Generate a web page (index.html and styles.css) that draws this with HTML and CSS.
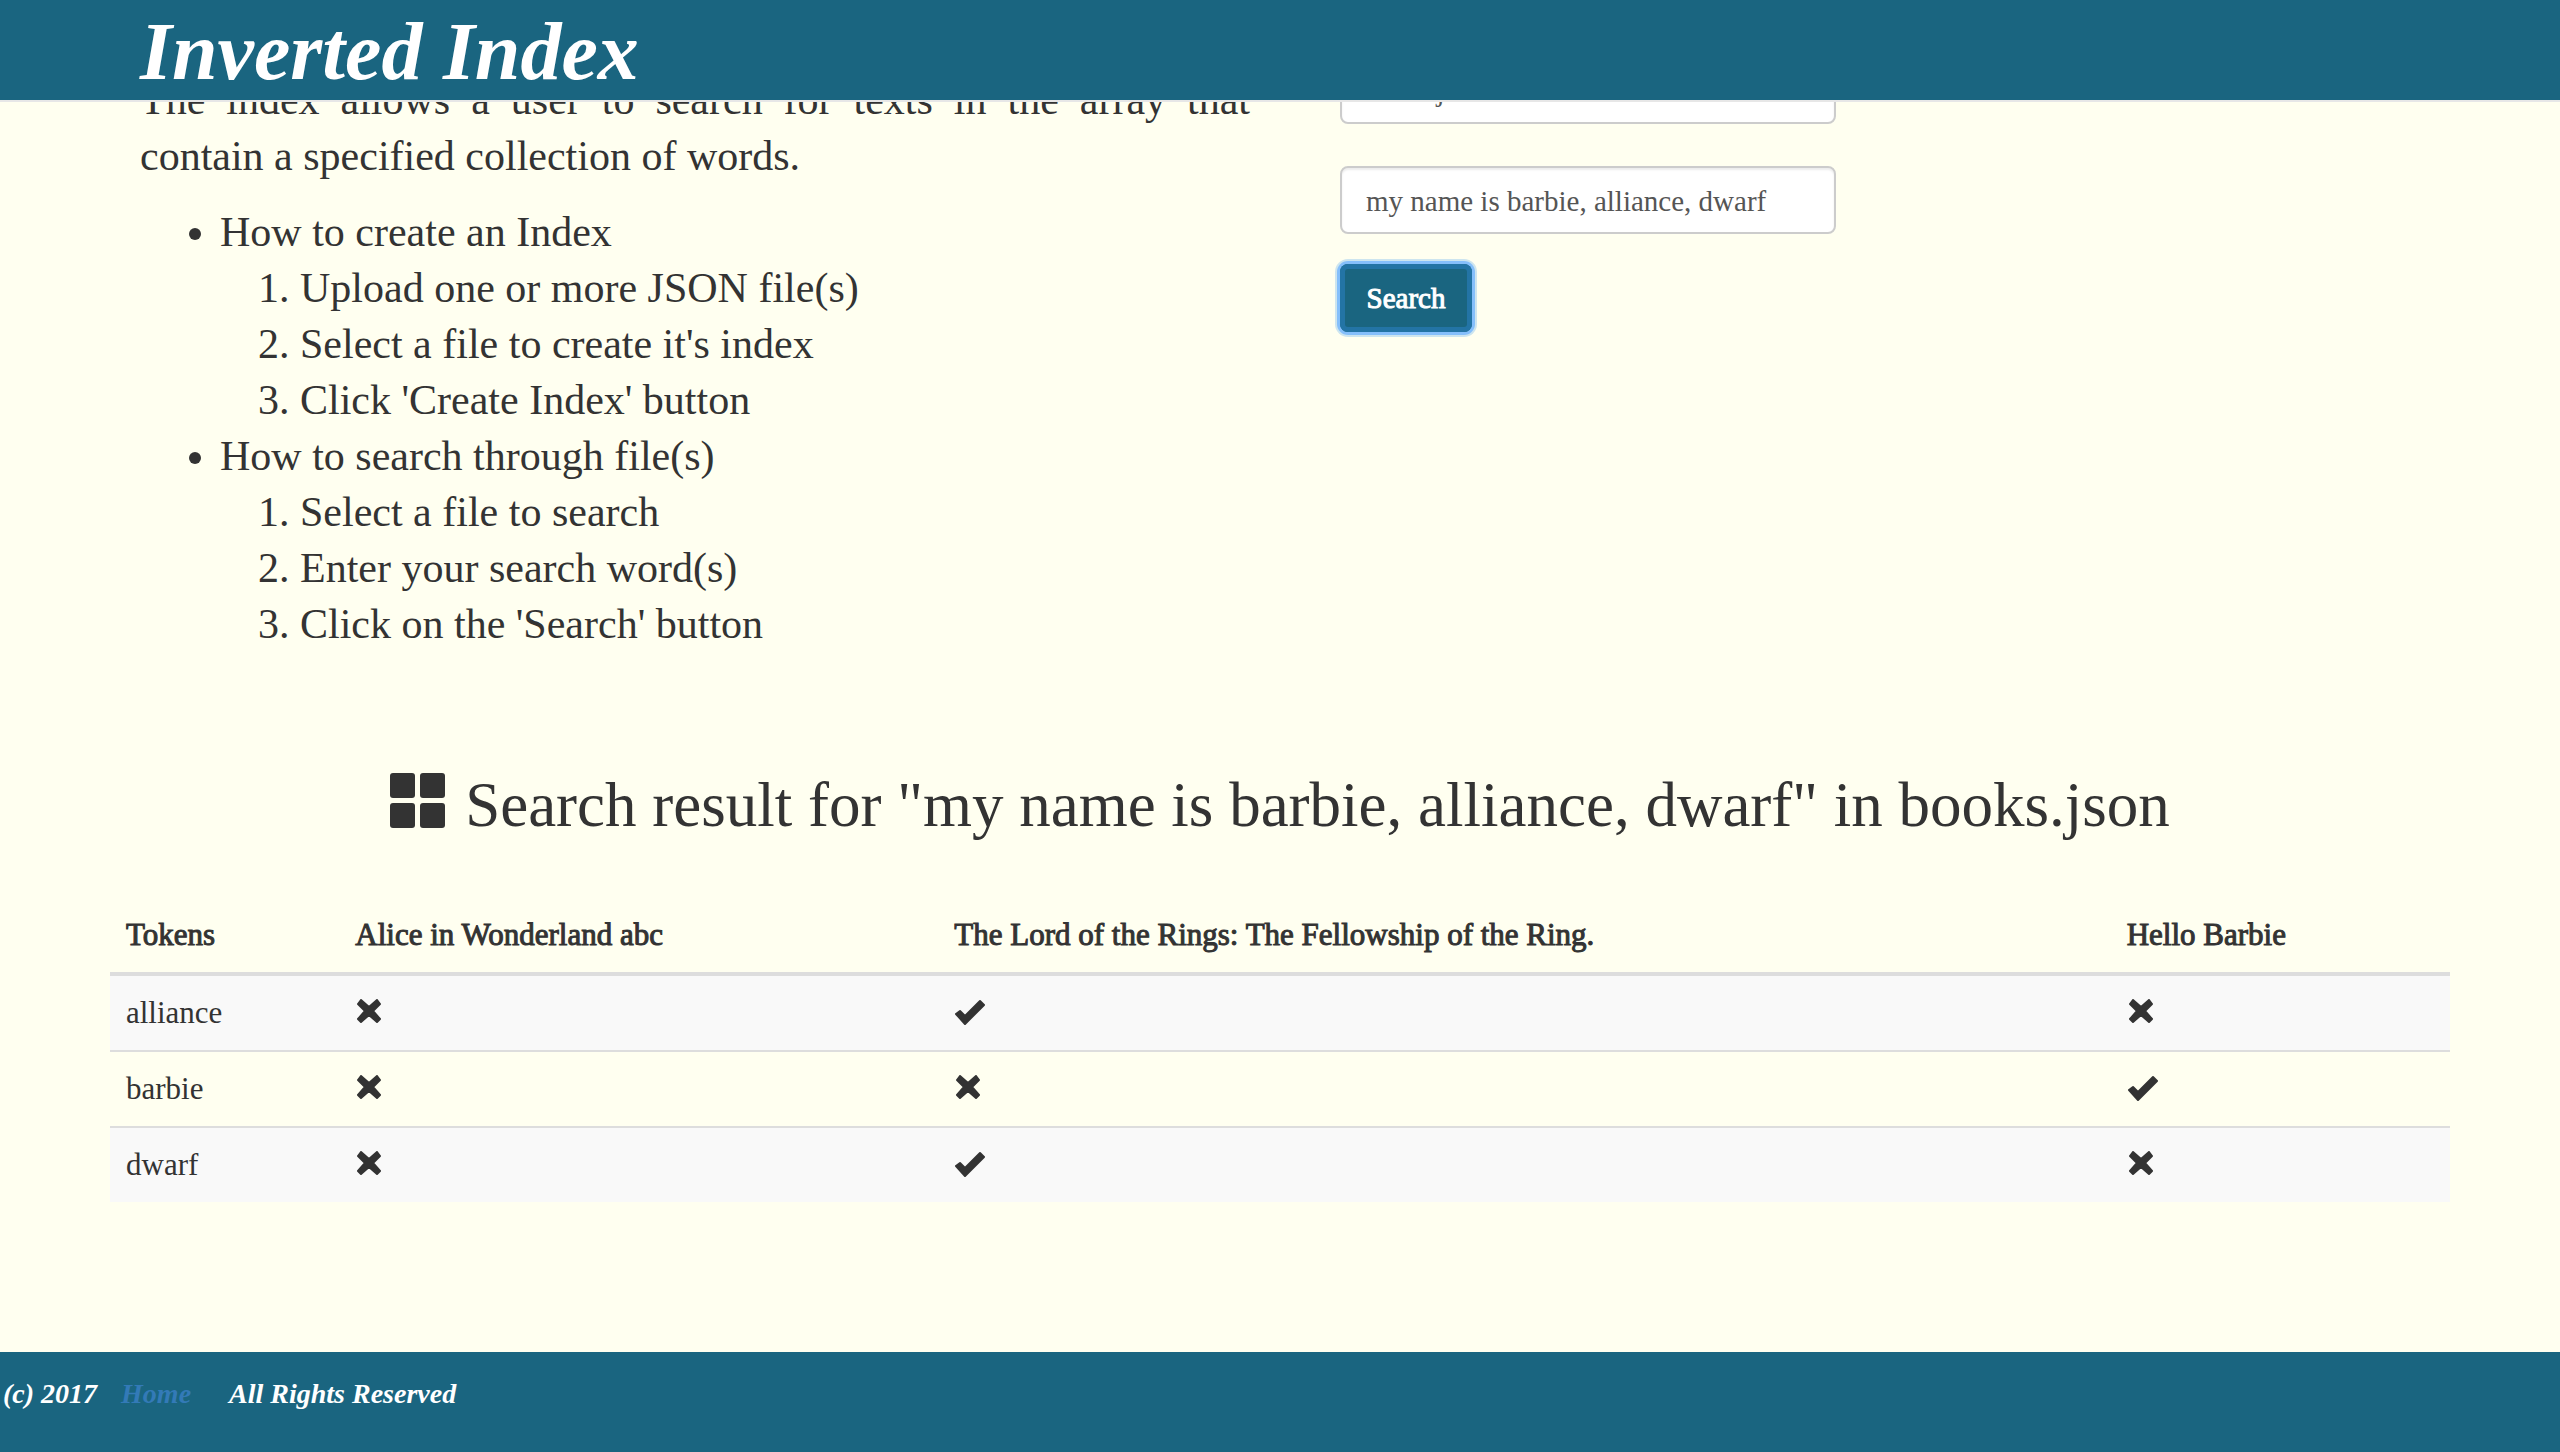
FILE: index.html
```html
<!DOCTYPE html>
<html lang="en">
<head>
<meta charset="utf-8">
<title>Inverted Index</title>
<link rel="stylesheet" href="styles.css">
</head>
<body>
<svg class="sprite" aria-hidden="true">
  <symbol id="cross" viewBox="0 0 32 26">
    <path d="M3 5 6 1 14 8 22 1 25 5 18 12 25 20 22 23 14 16 6 23 3 20 10 12Z"/>
  </symbol>
  <symbol id="check" viewBox="0 0 32 26">
    <path d="M2 15 6 12 11 17 26 2 30 6 11 25Z"/>
  </symbol>
</svg>
<header class="navbar"><h1 class="brand">Inverted Index</h1></header>
<main class="content">
  <div class="intro">
    <section class="guide">
      <p>The index allows a user to search for texts in the array that contain a specified collection of words.</p>
      <ul>
        <li>How to create an Index
          <ol>
            <li>Upload one or more JSON file(s)</li>
            <li>Select a file to create it's index</li>
            <li>Click 'Create Index' button</li>
          </ol>
        </li>
        <li>How to search through file(s)
          <ol>
            <li>Select a file to search</li>
            <li>Enter your search word(s)</li>
            <li>Click on the 'Search' button</li>
          </ol>
        </li>
      </ul>
    </section>
    <form class="search">
      <select class="field" aria-label="File"><option>books.json</option></select>
      <input class="field" type="text" aria-label="Search words" value="my name is barbie, alliance, dwarf">
      <button class="btn" type="button">Search</button>
    </form>
  </div>
  <h2 class="result-title">
    <svg class="grid-icon" viewBox="0 0 55 55" aria-hidden="true">
      <rect width="25" height="25" rx="3"/><rect x="30" width="25" height="25" rx="3"/>
      <rect y="30" width="25" height="25" rx="3"/><rect x="30" y="30" width="25" height="25" rx="3"/>
    </svg>
    <span>Search result for "my name is barbie, alliance, dwarf" in books.json</span>
  </h2>
  <table class="results">
    <colgroup><col class="col-token"><col class="col-a"><col class="col-b"><col></colgroup>
    <thead>
      <tr><th>Tokens</th><th>Alice in Wonderland abc</th><th>The Lord of the Rings: The Fellowship of the Ring.</th><th>Hello Barbie</th></tr>
    </thead>
    <tbody>
      <tr>
        <td>alliance</td>
        <td><svg class="mark"><use href="#cross"/></svg></td>
        <td><svg class="mark"><use href="#check"/></svg></td>
        <td><svg class="mark"><use href="#cross"/></svg></td>
      </tr>
      <tr>
        <td>barbie</td>
        <td><svg class="mark"><use href="#cross"/></svg></td>
        <td><svg class="mark"><use href="#cross"/></svg></td>
        <td><svg class="mark"><use href="#check"/></svg></td>
      </tr>
      <tr>
        <td>dwarf</td>
        <td><svg class="mark"><use href="#cross"/></svg></td>
        <td><svg class="mark"><use href="#check"/></svg></td>
        <td><svg class="mark"><use href="#cross"/></svg></td>
      </tr>
    </tbody>
  </table>
</main>
<footer class="footer">
  <span>(c) 2017</span>
  <a href="#">Home</a>
  <span class="rights">All Rights Reserved</span>
</footer>
</body>
</html>
```
FILE: styles.css
```css
* { box-sizing: border-box; }

body {
  margin: 0;
  min-height: 100vh;
  display: flex;
  flex-direction: column;
  background: #fffff0;
  color: #333;
  font-family: "Liberation Serif", "Times New Roman", serif;
}

.sprite { position: absolute; width: 0; height: 0; }

/* Fixed bar: page content passes beneath it */
.navbar {
  position: fixed;
  top: 0;
  left: 0;
  right: 0;
  z-index: 10;
  height: 102px;
  padding: 4px 140px 0;
  background: #1a6580;
  border-bottom: 2px solid #e7e7e7;
}

.brand {
  margin: 0;
  color: #fff;
  font-size: 82px;
  line-height: 96px;
  font-style: italic;
  font-weight: bold;
}

.content { padding: 56px 110px 120px; }

.intro {
  display: grid;
  grid-template-columns: 1fr 1fr;
}

.guide {
  padding: 16px 30px 0;
  font-size: 42px;
  line-height: 56px;
}

.guide p { margin: 0 0 20px; text-align: justify; }
.guide ul, .guide ol { margin: 0; padding-left: 80px; }

.search {
  display: flex;
  flex-direction: column;
  align-items: flex-start;
  padding-left: 60px;
}

.field {
  appearance: none;
  width: 496px;
  height: 68px;
  margin: 0 0 30px;
  padding: 2px 24px 0;
  border: 2px solid #ccc;
  border-radius: 8px;
  background: #fff;
  box-shadow: inset 0 2px 2px rgba(0, 0, 0, 0.075);
  color: #555;
  font-family: inherit;
  font-size: 29px;
}

select.field { margin-bottom: 42px; padding-left: 18px; }

.btn {
  width: 132px;
  height: 68px;
  padding: 0;
  border: 0;
  border-radius: 8px;
  background: #1a6580;
  box-shadow: 0 0 0 3px #85bffb, 0 0 0 5px #cde5ef, inset 0 0 0 5px #2374a5;
  color: #fff;
  font-family: inherit;
  font-size: 29px;
  -webkit-text-stroke: 1px #fff;
}

.result-title {
  display: flex;
  justify-content: center;
  gap: 20px;
  margin: 118px 0 58px;
  font-size: 63px;
  line-height: 70px;
  font-weight: normal;
}

.grid-icon { width: 55px; height: 55px; margin-top: 3px; fill: #333; }

.results {
  width: 100%;
  table-layout: fixed;
  border-spacing: 0;
  font-size: 31px;
  line-height: 42px;
}

.col-token { width: 9.8%; }
.col-a { width: 25.6%; }
.col-b { width: 50.1%; }

.results th, .results td { padding: 16px; text-align: left; vertical-align: top; }

.results th {
  border-bottom: 4px solid #ddd;
  font-weight: normal;
  -webkit-text-stroke: 1px #333;
}

.results tbody tr + tr td { border-top: 2px solid #ddd; }
.results tbody tr:nth-child(odd) td { background: #f9f9f9; }

.mark {
  display: block;
  width: 32px;
  height: 26px;
  margin: 7px 0 9px;
  fill: #333;
  stroke: #333;
  stroke-width: 2;
  stroke-linejoin: round;
}

.footer {
  display: flex;
  gap: 24px;
  height: 100px;
  margin-top: auto;
  padding: 22px 3px;
  background: #1a6580;
  color: #fff;
  font-size: 28px;
  line-height: 40px;
  font-style: italic;
  font-weight: bold;
}

.footer a { color: #337ab7; text-decoration: none; }
.rights { padding-left: 14px; }
```
